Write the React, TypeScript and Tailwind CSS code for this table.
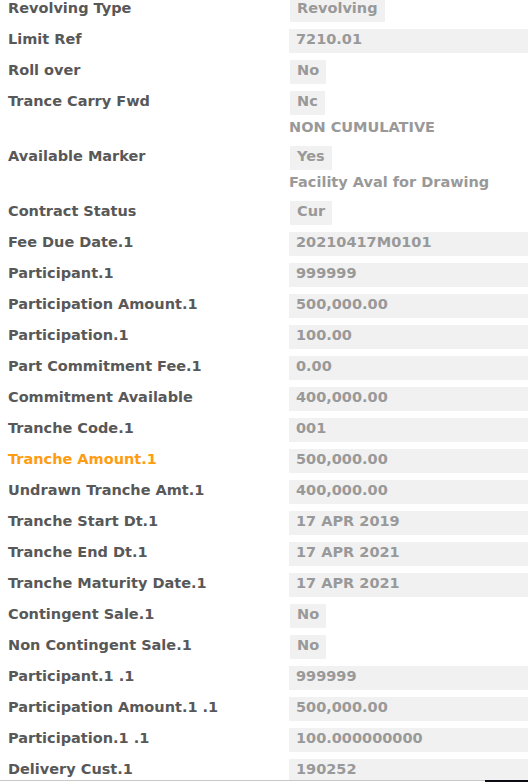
const rows: { label: string, value: string, short?: boolean, sub?: string, accent?: boolean }[] = [
    { label: "Revolving Type", value: "Revolving", short: true },
    { label: "Limit Ref", value: "7210.01" },
    { label: "Roll over", value: "No", short: true },
    { label: "Trance Carry Fwd", value: "Nc", short: true, sub: "NON CUMULATIVE" },
    { label: "Available Marker", value: "Yes", short: true, sub: "Facility Aval for Drawing" },
    { label: "Contract Status", value: "Cur", short: true },
    { label: "Fee Due Date.1", value: "20210417M0101" },
    { label: "Participant.1", value: "999999" },
    { label: "Participation Amount.1", value: "500,000.00" },
    { label: "Participation.1", value: "100.00" },
    { label: "Part Commitment Fee.1", value: "0.00" },
    { label: "Commitment Available", value: "400,000.00" },
    { label: "Tranche Code.1", value: "001" },
    { label: "Tranche Amount.1", value: "500,000.00", accent: true },
    { label: "Undrawn Tranche Amt.1", value: "400,000.00" },
    { label: "Tranche Start Dt.1", value: "17 APR 2019" },
    { label: "Tranche End Dt.1", value: "17 APR 2021" },
    { label: "Tranche Maturity Date.1", value: "17 APR 2021" },
    { label: "Contingent Sale.1", value: "No", short: true },
    { label: "Non Contingent Sale.1", value: "No", short: true },
    { label: "Participant.1 .1", value: "999999" },
    { label: "Participation Amount.1 .1", value: "500,000.00" },
    { label: "Participation.1 .1", value: "100.000000000" },
    { label: "Delivery Cust.1", value: "190252" },
]

export default function App() {
    return (
        <div className="w-[528px] h-[782px] bg-white overflow-hidden flex flex-col" style={{ fontFamily: '"DejaVu Sans", sans-serif' }}>
            <div className="h-[780px] overflow-hidden">
                <div className="-mt-[2px] flex flex-col gap-[7px] text-[14.5px] font-bold">
                    {rows.map(row => (
                        <div key={row.label} className="grid grid-cols-[289px_1fr]">
                            <div className={`pl-2 h-6 leading-5 whitespace-nowrap ${row.accent ? "text-[#ff9c11]" : "text-[#585858]"}`}>
                                {row.label}
                            </div>
                            <div className="flex flex-col items-start">
                                {row.short ? (
                                    <div className="ml-px h-6 leading-5 px-[7px] bg-[#f1f1f1] text-[#999999]">{row.value}</div>
                                ) : (
                                    <div className="w-full h-6 leading-5 pl-[7px] bg-[#f1f1f1] text-[#999999]">{row.value}</div>
                                )}
                                {row.sub && (
                                    <div className="h-6 leading-5 pt-[2px] text-[#999999] whitespace-nowrap">{row.sub}</div>
                                )}
                            </div>
                        </div>
                    ))}
                </div>
            </div>
            <div className="flex h-[2px]">
                <div className="flex-1 border-t border-[#c8c8c8]"></div>
                <div className="w-[43px] bg-[#0b0d12]"></div>
            </div>
        </div>
    )
}
